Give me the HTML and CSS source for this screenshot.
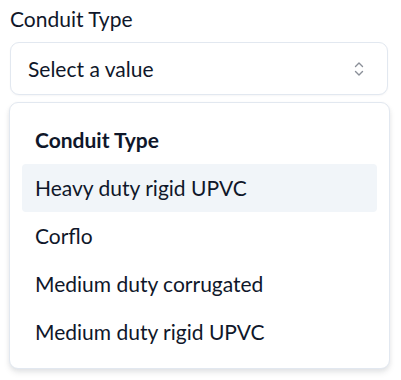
FILE: index.html
```html
<!DOCTYPE html>
<html lang="en">
<head>
    <meta charset="UTF-8">
    <meta name="viewport" content="width=device-width, initial-scale=1.0">
    <title>Conduit Type</title>
    <link rel="stylesheet" href="styles.css">
</head>
<body>
    <div class="field">
        <label class="field-label">Conduit Type</label>
        <div class="select-wrap">
            <button class="select-trigger" type="button">
                <span>Select a value</span>
                <svg class="chevrons" width="12" height="18" viewBox="0 0 12 18" fill="none" stroke="#8a8f98" stroke-width="1.4" stroke-linecap="round" stroke-linejoin="round">
                    <path d="M2.5 6.5 L6 3 L9.5 6.5"/>
                    <path d="M2.5 11.5 L6 15 L9.5 11.5"/>
                </svg>
            </button>

            <div class="menu">
                <div class="menu-heading">Conduit Type</div>
                <div class="menu-item active">Heavy duty rigid UPVC</div>
                <div class="menu-item">Corflo</div>
                <div class="menu-item">Medium duty corrugated</div>
                <div class="menu-item">Medium duty rigid UPVC</div>
            </div>
        </div>
    </div>
</body>
</html>
```

FILE: styles.css
```css
html, body {
    min-height: 100%;
}

body {
    margin: 0;
    min-height: 380px;
    font-family: 'Lato', 'Noto Sans', sans-serif;
    background: #ffffff;
    color: #0f172a;
}

.field {
    padding: 7px 13px 0 10px;
}

.field-label {
    display: block;
    font-size: 21px;
    line-height: 24px;
    margin-bottom: 11px;
}

.select-trigger {
    width: 100%;
    height: 53px;
    display: flex;
    align-items: center;
    justify-content: space-between;
    padding: 0 22px 0 17px;
    border: 1px solid #e2e8f0;
    border-radius: 9px;
    background: #ffffff;
    font-family: inherit;
    font-size: 21px;
    color: #0f172a;
    box-shadow: 0 1px 2px rgba(15, 23, 42, 0.04);
    box-sizing: border-box;
}

.chevrons {
    display: block;
}

.menu {
    margin: 7px -2px 0 -1px;
    padding: 12px;
    background: #ffffff;
    border: 1px solid #e2e8f0;
    border-radius: 9px;
    box-shadow: 0 4px 6px rgba(15, 23, 42, 0.08), 0 2px 4px rgba(15, 23, 42, 0.05);
}

.menu-heading {
    font-size: 21px;
    font-weight: 700;
    line-height: 48px;
    padding-left: 13px;
    margin-top: 1px;
}

.menu-item {
    font-size: 21px;
    line-height: 48px;
    padding-left: 13px;
    border-radius: 4px;
}

.menu-item.active {
    background: #f1f5f9;
}
```
